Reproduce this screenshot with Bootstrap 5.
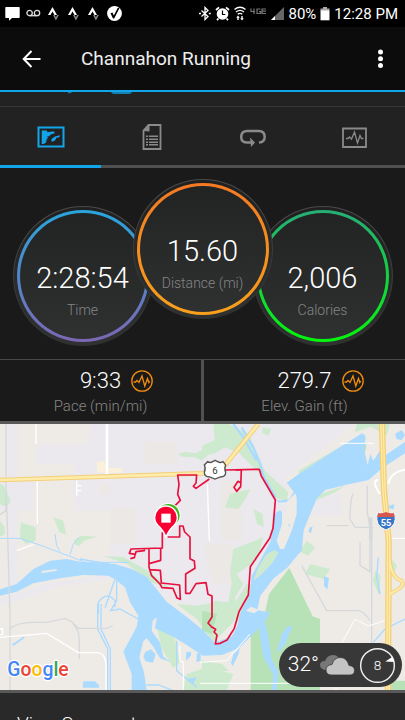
<!DOCTYPE html>
<html lang="en">
<head>
<meta charset="utf-8">
<meta name="viewport" content="width=device-width, initial-scale=1">
<title>Channahon Running</title>
<link rel="stylesheet" href="https://cdn.jsdelivr.net/npm/bootstrap@5.3.0/dist/css/bootstrap.min.css">
<style>
body { font-family: Roboto, "Liberation Sans", sans-serif; background: #1a1a1a; color: #fff; }
svg { display: block; flex-shrink: 0; }
.status-bar { height: 27px; background: #000; font-size: 15px; line-height: 27px; padding: 0 7px 0 5px; }
.status-bar span { padding-top: 2px; }
.status-left { gap: 6px; }
.status-right { gap: 4px; }
.app-bar { height: 65px; background: #0c0c0c; border-bottom: 2px solid #12a5ea; padding: 0 12px 0 16px; }
.app-title { font-size: 19px; line-height: 24px; font-weight: 400; margin-left: 34px; color: #eee; }
.bare { background: none; border: 0; padding: 6px; color: inherit; }
.link-edge { height: 15px; background: #222; border-bottom: 1px solid #363636; }
.tab-strip { background: #222; }
.tab-strip button { height: 61px; border: 0; border-bottom: 3px solid #505050; background: none; color: #8a8a8a; padding: 2px 0 0; }
.tab-strip button.active { color: #12a5ea; border-color: #12a5ea; }
.dials { padding: 11px 0 13px; }
.dial { width: 140px; height: 140px; padding: 3px; margin-top: 27px; border-radius: 50%; border: 1px solid transparent;
  background: linear-gradient(#202020, #303232) padding-box, linear-gradient(#4a4a4a, #2e2f2f) border-box; }
.dial-mid { margin: 0 -20px; z-index: 1; }
.ring { height: 100%; border-radius: 50%; border: 3px solid transparent; padding-top: 48px;
  background: linear-gradient(#222323, #2f3131) padding-box, linear-gradient(var(--from), var(--to)) border-box; }
.ring-time { --from: #29a5dc; --to: #7d67b5; }
.ring-distance { --from: #f47a24; --to: #f9a01b; }
.ring-calories { --from: #27ad76; --to: #04f50c; }
.big-num { font-size: 29px; line-height: 34px; font-weight: 300; }
.caption-text { font-size: 15px; line-height: 20px; font-weight: 300; color: #858585; }
.dial .caption-text { margin-top: 5px; font-size: 14px; }
.stats { border-top: 1px solid #484848; }
.stat { padding: 8px 0 5px; }
.stat + .stat { border-left: 3px solid #505050; }
.stat-num { font-size: 22px; line-height: 26px; font-weight: 300; gap: 10px; padding-left: 32px; margin-bottom: 2px; }
.map-box { border-top: 3px solid #5a595a; border-bottom: 3px solid #5a595a; }
.weather { right: 3px; bottom: 3px; height: 44px; border-radius: 22px; background: #383838; padding: 0 6px 0 9px; font-size: 21px; font-weight: 300; }
.segments { background: #292929; padding: 17px 17px 12px; font-size: 19px; line-height: 28px; font-weight: 300; color: #fff; }
.segments:hover { color: #fff; }
</style>
<script src="https://cdn.jsdelivr.net/npm/bootstrap@5.3.0/dist/js/bootstrap.bundle.min.js"></script>
</head>
<body>
<div class="vh-100 overflow-hidden d-flex flex-column">
  <div class="status-bar d-flex justify-content-between align-items-center flex-shrink-0">
    <div class="status-left d-flex align-items-center">
      <svg width="15" height="15" viewBox="0 0 15 15"><path fill="#fff" d="M1 1h13q.7 0 .7.7v9.6q0 .7-.7.7H7l-3 2.8V12H1q-.7 0-.7-.7V1.700Q.3 1 1 1z"/></svg>
      <svg width="15" height="15" viewBox="0 0 15 15"><g fill="none" stroke="#ddd" stroke-width="1.300"><circle cx="3.600" cy="7" r="2.700"/><circle cx="11" cy="7" r="2.700"/><path d="M3.600 9.700H11"/></g></svg>
      <svg width="14" height="15" viewBox="0 0 14 15"><path fill="#fff" d="M5.500 1l4.500 8H7.500l-2-3.600L3.500 9H1z"/><path fill="#888" d="M6 9h1.700l1.200 2.200L10.100 9h1.800l-3 5.500z"/></svg>
      <svg width="14" height="15" viewBox="0 0 14 15"><path fill="#fff" d="M5.500 1l4.500 8H7.500l-2-3.600L3.500 9H1z"/><path fill="#888" d="M6 9h1.700l1.200 2.200L10.100 9h1.800l-3 5.500z"/></svg>
      <svg width="14" height="15" viewBox="0 0 14 15"><path fill="#fff" d="M5.500 1l4.500 8H7.500l-2-3.600L3.500 9H1z"/><path fill="#888" d="M6 9h1.700l1.200 2.200L10.100 9h1.800l-3 5.500z"/></svg>
      <svg width="15" height="15" viewBox="0 0 15 15"><circle cx="7.500" cy="7.500" r="7.400" fill="#fff"/><path fill="#000" d="M3.500 7.300l2-.8 1.300 3L10.700 2l1.800 0L7.200 12.500H6z"/></svg>
    </div>
    <div class="status-right d-flex align-items-center">
      <svg width="12" height="15" viewBox="0 0 12 15"><path fill="none" stroke="#fff" stroke-width="1.300" d="M2.500 4.500l6.500 6L6 13.500v-12l3 3-6.500 6"/><path fill="#fff" d="M0 6.700h2v1.600H0zM9.800 6.700h2v1.600h-2z"/></svg>
      <svg width="15" height="15" viewBox="0 0 15 15"><circle cx="7.500" cy="8" r="5.800" fill="#fff"/><path stroke="#fff" stroke-width="1.800" d="M1 4l3-2.700M14 4l-3-2.700M3.500 12.500L2 14.200M11.500 12.500l1.500 1.700"/><path fill="none" stroke="#000" stroke-width="1.200" d="M7.500 4.500v4h2.800"/></svg>
      <svg width="12" height="15" viewBox="2 0 12 15"><g fill="none" stroke="#fff" stroke-width="1.300"><path d="M2.500 3.500q5.500-4.500 11 0M4 6q4-3.200 8 0M5.700 8.300q2.300-1.700 4.600 0"/></g><path fill="#fff" d="M6 9.500l1.800 2.300H6.700V14H5.300v-2.200H4.200zM10 14.500l-1.800-2.300h1.100V10h1.400v2.200h1.100z"/></svg>
      <svg width="16" height="15" viewBox="0 0 16 15"><path fill="none" stroke="#777" stroke-width="1.200" d="M1 2.500v3h4M4 2.500V8M10.500 3H7v4.500h3.500V5.500H9M16 3h-4v4.500h4M12 5.200h4"/></svg>
      <svg width="15" height="15" viewBox="0 0 15 15"><path fill="#666" d="M14 1v13H1z"/><path fill="#fff" d="M5 10v4H1z"/></svg>
      <span>80%</span>
      <svg width="10" height="15" viewBox="0 0 10 15"><path fill="#aaa" d="M3 1h4v1.500h2.500V5h-9V2.500H3z"/><path fill="#fff" d="M.5 4.500h9v9.800h-9z"/></svg>
      <span>12:28 PM</span>
    </div>
  </div>

  <header class="app-bar d-flex align-items-center flex-shrink-0">
    <button class="bare" type="button" aria-label="Back"><svg width="19" height="18" viewBox="0 0 19 18"><path fill="none" stroke="#fff" stroke-width="2" d="M9.500 1L1.700 9l7.800 8M1.700 9H18.500"/></svg></button>
    <h1 class="app-title mb-0 me-auto">Channahon Running</h1>
    <button class="bare" type="button" aria-label="More options"><svg width="13" height="20" viewBox="0 0 13 20"><g fill="#fff"><circle cx="6.500" cy="3" r="2.500"/><circle cx="6.500" cy="9.800" r="2.500"/><circle cx="6.500" cy="16.500" r="2.500"/></g></svg></button>
  </header>

  <main class="flex-fill overflow-hidden">
    <div class="link-edge"><svg width="140" height="3" viewBox="0 0 140 3"><path fill="#1280b5" d="M68 0h4q-1 1.500-4 1.200zM111 0h21q-1 2-3 2h-15q-2 0-3-2z"/></svg></div>

    <div class="tab-strip d-flex" role="tablist">
      <button class="active col-3 d-flex align-items-center justify-content-center" type="button" role="tab" aria-label="Overview" aria-selected="true"><svg width="28" height="22" viewBox="0 0 28 22"><path fill="none" stroke="currentColor" stroke-width="2" d="M1.500 1.500h25v19h-25z"/><path fill="currentColor" d="M4.700 4.500h5l.8 1.700 4.500-.6 2.700.2-.5 1.800-3.500.8-1.500 1.800-2.200.3 1.200 1.500-2.200 1 1.500 1-1.800.8.8 1.200-2.700 2H4.700zM22.900 9.300l-.5 2-3 .5-1.200 2.400-2.800 1.600-1.300-1.200.9-2.200 3-2z"/></svg></button>
      <button class="col-3 d-flex align-items-center justify-content-center" type="button" role="tab" aria-label="Details"><svg width="20" height="26" viewBox="0 0 20 26"><path fill="none" stroke="currentColor" stroke-width="1.800" d="M6.500 1h12v24h-17V6.500z"/><path fill="currentColor" d="M1 7l6.500-6.500V7.500zM4 11.500h2v1.500H4zm3 0h9v1.500H7zM4 14.500h2V16H4zm3 0h9V16H7zM4 17.500h2V19H4zm3 0h9V19H7zM4 20h2v1.500H4zm3 0h9v1.500H7z"/></svg></button>
      <button class="col-3 d-flex align-items-center justify-content-center" type="button" role="tab" aria-label="Laps"><svg width="26" height="20" viewBox="0 0 26 20"><path fill="none" stroke="currentColor" stroke-width="2.500" d="M19 15.500q5.700-.6 5.700-5.600 0-6-6-6H7.200q-6 0-6 6 0 5.600 6 5.600H11"/><path fill="currentColor" d="M10 10.500l5 5-4 4.500z"/></svg></button>
      <button class="col-3 d-flex align-items-center justify-content-center" type="button" role="tab" aria-label="Charts"><svg width="25" height="21" viewBox="0 0 25 21"><path fill="none" stroke="currentColor" stroke-width="1.800" d="M1 1.500h23v18.500H1z"/><path fill="none" stroke="currentColor" stroke-width="1.300" d="M4 11.500h2l1.500-1.500 2 2 3-7 3 11 2.500-7.500 1.500 3H21.500"/></svg></button>
    </div>

    <section class="dials d-flex justify-content-center text-center">
      <div class="dial"><div class="ring ring-time"><div class="big-num">2:28:54</div><div class="caption-text">Time</div></div></div>
      <div class="dial dial-mid"><div class="ring ring-distance"><div class="big-num">15.60</div><div class="caption-text">Distance (mi)</div></div></div>
      <div class="dial"><div class="ring ring-calories"><div class="big-num">2,006</div><div class="caption-text">Calories</div></div></div>
    </section>

    <section class="stats row g-0 text-center">
      <div class="col stat">
        <div class="stat-num d-flex align-items-center justify-content-center">9:33
          <svg width="22" height="22" viewBox="0 0 22 22"><g fill="none" stroke="#f28c0c" stroke-width="1.300"><circle cx="11" cy="11" r="10.200"/><path d="M2.500 12h2l1.500-1.500 2 2 3-6.500 2.800 10 2.700-7.500 1.300 4 1-1.500"/></g></svg></div>
        <div class="caption-text">Pace (min/mi)</div>
      </div>
      <div class="col stat">
        <div class="stat-num d-flex align-items-center justify-content-center">279.7
          <svg width="22" height="22" viewBox="0 0 22 22"><g fill="none" stroke="#f28c0c" stroke-width="1.300"><circle cx="11" cy="11" r="10.200"/><path d="M2.500 12h2l1.500-1.500 2 2 3-6.500 2.800 10 2.700-7.500 1.300 4 1-1.500"/></g></svg></div>
        <div class="caption-text">Elev. Gain (ft)</div>
      </div>
    </section>

    <section class="map-box position-relative">
      <svg class="w-100" viewBox="0 0 1215 798" role="img" aria-label="Route map">
        <path fill="#eeebe7" d="M0 0h1215v798H0z"/>
        <!-- built-up areas -->
        <path fill="#ebe9ed" d="M270 0H1060L860 160V270H830V440L690 600 500 520 400 430 330 410V260H220V120H110V60H265zM940 210h85v65h-85zM22 0h30V500H22zM0 170h100v90H0zM130 480l200-30 20 15-160 20-190 60v-20z"/>
        <path fill="#ebe8e6" d="M435 55h95v65h-95zM330 250h75v110h-75zM665 170h60v180h-60zM300 180h30v30h-30zM610 360h90v120h-60z"/>
        <path fill="#fbf0dc" d="M290 115l20-5 15 22h42v14h-75z"/>
        <!-- parks -->
        <g fill="#cdeacf">
          <path d="M0 180l12 5 20 45-12 20-20-10zM0 290l14 20v22l-14 5zM62 295l45 15v40l-30 10-17-20zM160 280l30 10 8 42-20-8zM222 350l20-15 50 3-40 12-15 17-15-8z"/>
          <path d="M310 397l60 2 80 45 60 50-60-20-70-55zM535 90l20-7 30 5 25-10 40-8-45 40-20-10-40-2z"/>
          <path d="M606 65l90-40 50 30-55 5-50 30-35 5zM640 0h45l60 30 50 110 70 65-5 30-45-20-40-70-60-60-70-25zM788 10l25 5-8 20-18-8zM690 210l60-15-10 25-25 35-40-5zM760 255l28 15 3 40-20-10z"/>
          <path d="M700 375l40-15 50-20-20 70-60 40 20 30-25 40 10 60-110-20 40-30 40 5 10-60-5-30z"/>
          <path d="M530 540l60 5 60-10h70l-20 60-60 60-50-70zM470 608l50 15 20 90-20 20-35-60z"/>
          <path d="M895 140L1080 35l20 10-90 60-110 50zM920 350l25 20-20 25-25-12zM930 420l60 15-20 30-55-15zM945 215l90-30-30 20-70 30zM1070 0h65l-70 25z"/>
          <path d="M1126 440l16 15-5 60-18-45zM1175 405l16 20-8 20-10-15zM740 480l60 0-40 60-45 60-25-40zM560 750l60-20 80 20-20 48H550zM606 710l60 10 20 20-80 5zM1100 0h70l-10 35z"/>
        </g>
        <path fill="#b7e2b8" d="M868 432l70 145 22 8v213H752V620l40-40 15-70zM606 560l45 10-15 60-30-10zM1050 80l50-25-10 65-35-10zM1170 770h45v28h-60z"/>
        <!-- river -->
        <path fill="#abdaff" d="M0 496L50 480 100 435 150 410 200 405 240 413 300 418 345 420 395 435 440 458 500 533 560 578 609 618 644 656 696 637 712 605 722 565 750 510 755 455 775 420 812 352 822 270 840 258 846 265V300L830 350 840 375H852L875 320 890 270V222L886 208 860 233 838 236 825 225 840 230 868 225 881 203 860 176 906 143 1006 78 1086 28 1096 35 1094 85 1103 123 1111 90 1120 110 1140 80V105L1215 53V88L1146 133 1106 168 1036 183 976 198 951 223 936 258 911 318 906 378 861 432 821 463 781 515 772 558 811 566 791 598 751 638 716 673 666 693 609 695 560 663 520 638 465 613 470 580 458 590 455 620 480 655 490 698 512 714 480 703 460 668 440 643 430 652 418 700 432 745 440 798H395V750L370 683 410 608 415 575 390 535 375 490 345 466 325 455 250 453 180 463 100 478 50 503 0 515z"/>
        <path fill="#cdeacf" d="M775 430L800 390 825 378 835 388 815 420 780 455 760 470z"/>
        <path fill="#eeebe7" d="M125 441l45-6v5l-45 8zM738 560l15-12 24 10-15 10z"/>
        <path fill="#abdaff" d="M435 684l18-8 14 15-8 25-22-4-7-14zM775 600l20-5 10 40 10 70 20 40-5 53h-15l5-45-30-55-8-50zM830 690l15-60 20-25 12 5-10 20-10 30zM700 690l20-18-5 20-17 35-5-10zM972 457l15 5-5 35-10-12zM1185 30l20-12 10 15-10 15-15-2zM1165 245l18-4-2 15-15-3zM250 772l35 0 12 12v7h-49zM35 662l35-24 5 3-34 24zM930 310l8-2-5 20-8-5zM865 300l6 3-4 6zM558 685l15-2v12l-15 15zM590 690l12-5v25l-12 5zM560 765l30-5-10 20z"/>
        <g fill="none" stroke="#abdaff" stroke-width="4">
          <path d="M0 343h60l45 15 100 37 50 20 130 0M165 330l5 35 10 17M238 340l-18 20-10 32" stroke-width="3"/>
          <path d="M725 10l35 60 20 50 12 40 35 60M700 0l30 40 40 70" stroke-width="7"/>
          <path d="M345 466l-30 85M350 470l0 60-18 30 28-5 55 30M295 570v-35q25-35 50-5v20M293 540v75l30 60v123M303 540v75l28 60v123"/>
          <path d="M240 405l85 15 60 15 110 130 115 60M530 650v90l60 50M440 783h35l80 30M1135 400l-5 60 10 50M1215 585l-60 30-35 40"/>
        </g>
        <!-- minor roads -->
        <g fill="none" stroke="#d5d9dc" stroke-width="4">
          <path d="M18 0v260L0 272M20 240l10 330v228M30 615q20-20 70-20h40l55-12 20 10 20 20h85l18-8M220 600q20 20 18 60v45"/>
          <path d="M1102 185v80l8 45v130M1060 210q-8 10-10 60v15l15 25h55M980 305h65M1080 355v70l35 20M905 425l75 135h95q15 0 35 30M1115 310v400"/>
        </g>
        <path fill="none" stroke="#d5d9dc" stroke-width="10" d="M1112 280v70"/>
        <g fill="none" stroke="#fff" stroke-width="4">
          <path d="M108 0v60M112 170v130M0 640l140-12 95 58h55q30 0 28 50v62M50 380l50-18M230 170v45M232 185h12M232 200h12M622 180l6 170M0 615h8v17H0"/>
          <path stroke-width="8" d="M321 0v150"/>
          <path d="M1020 58h102M1165 343h50M1160 588l-55 18-40-20-50 90M1008 775v23M600 715l80-5 70-80M550 798v-85h-10v-50M600 778h380" stroke-width="3"/>
          <path stroke-width="6" d="M1140 210q-28-40-5-43M1165 180q5-35 50-43"/>
        </g>
        <!-- highways -->
        <g fill="none" stroke="#f3cf78" stroke-width="14">
          <path d="M0 168L606 148 670 130 775 0"/><path stroke-width="19" d="M1146 0l6 200 14 150-2 448"/><path stroke-width="12" d="M1168 400q5 60 35 70 20 15-35 40"/>
        </g>
        <g fill="none" stroke="#ffebaa" stroke-width="8">
          <path d="M0 168L606 148 670 130 775 0"/><path stroke-width="11" d="M1146 0l6 200 14 150-2 448"/><path stroke-width="6" d="M1168 400q5 60 35 70 20 15-35 40"/>
        </g>
        <path fill="none" stroke="#f0c766" stroke-width="2" d="M1146 0l6 200 14 150-2 448"/>
        <!-- recorded track -->
        <g fill="none" stroke="#e8103f" stroke-width="5" stroke-linejoin="round">
          <path d="M525 245l16-16-8-18 4-30-4-28h57l-2 24-8 10 8 6 40-28M675 138l103-2 6 20 42 72-7 85-10 30-58 85-6 85-28 50-14 50-22 35-20 10-15 2 5-27-9-9 5-8-12-7-11-12 12-18v-63l-12-5-6-35-30 3-18 29h-13v-58l28-17-2-22-13-7v-65l-16-15-5-18h-10v33h-36"/>
          <path d="M706 138l18 0-2 50-12 14-8-12 12-18 8 4M487 325v47l-94 3-5 13 18 3 2-8 25-3v-7M406 389l-3 12-12 3M487 372l-5 2v35l-35 10M447 375v55l8 25 25 25 6 11 33 2 12 29 10 4-2-43-55-6-3-38-33-2"/>
        </g>
        <!-- start and finish pins -->
        <circle cx="505" cy="274" r="37" fill="#fff"/><circle cx="505" cy="274" r="34" fill="#43b31c"/>
        <path fill="#f80031" stroke="#fff" stroke-width="4" d="M498 338q-10-22-23-33a34 34 0 1 1 46 0q-13 11-23 33z"/>
        <path fill="#fff" d="M484 269h28v27h-28z"/>
        <!-- US 6 shield -->
        <path fill="#fff" stroke="#555" stroke-width="4" d="M623 113q8 5 15 0l7-4 8 4q8 5 16 0l8 10q-5 10 0 22 0 14-16 14l-16 6-16-6q-16 0-16-14 5-12 0-22z"/>
        <text x="645" y="149" text-anchor="middle" font-size="29" fill="#333" font-family="Roboto, sans-serif">6</text>
        <!-- I-55 shield -->
        <path fill="#3875c8" stroke="#fff" stroke-width="3" d="M1132 268q-9 38 26 50 35-12 26-50z"/>
        <path fill="#d9584e" d="M1135 266q8 4 23-2 15 6 23 2l3 13h-52z"/>
        <text x="1158" y="306" text-anchor="middle" font-size="28" font-weight="700" fill="#fff" font-family="Roboto, sans-serif">55</text>
        <text x="22" y="756" font-size="58" font-weight="500" font-family="Roboto, sans-serif" stroke="#fff" stroke-width="7" stroke-linejoin="round" paint-order="stroke"><tspan fill="#4285f4">G</tspan><tspan fill="#ea4335">o</tspan><tspan fill="#fbbc05">o</tspan><tspan fill="#4285f4">g</tspan><tspan fill="#34a853">l</tspan><tspan fill="#ea4335">e</tspan></text>
      </svg>
      <div class="weather position-absolute d-flex align-items-center">
        <span>32°</span>
        <svg width="36" height="22" viewBox="0 0 36 22"><path fill="#777" d="M6 16q-5-1-5-5t5-4q2-6 8-6 4 0 6 3l-4 6-8 6z"/><path fill="#c4c4c4" stroke="#383838" stroke-width=".8" d="M12 21q-5-.5-5-5.200T13 10.500Q15 3.500 21 3.500q7 0 9 8 5.500.5 5.500 5t-5 4.500z"/></svg>
        <svg class="ms-1" width="37" height="37" viewBox="0 0 38 38"><circle cx="19" cy="19" r="17.300" fill="none" stroke="#eee" stroke-width="1.500"/><path fill="#fff" d="M27 15l7.500-5 1.500 5.500z"/><text x="19" y="24" text-anchor="middle" font-size="14" fill="#fff" font-weight="300">8</text></svg>
      </div>
    </section>

    <a class="segments d-block text-decoration-none" href="#segments">View Segments</a>
  </main>
</div>
</body>
</html>
